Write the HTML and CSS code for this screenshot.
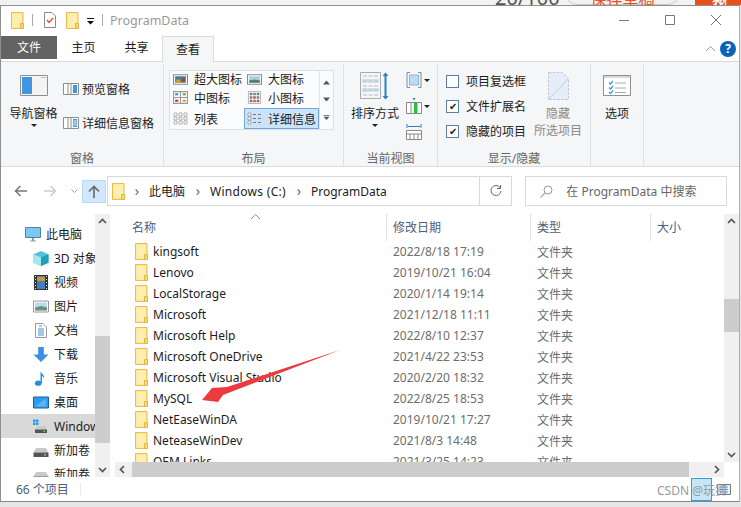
FILE: index.html
```html
<!DOCTYPE html>
<html lang="zh">
<head>
    <meta charset="UTF-8">
    <title>ProgramData</title>
    <link rel="stylesheet" href="styles.css">
</head>
<body>
    <svg class="defs" width="0" height="0">
        <symbol id="folder" viewBox="0 0 13 17">
            <path d="M.5.500h11.500v16H.5z" fill="#fde28f" stroke="#e8bf4c"/>
            <path d="M1.500 1.500h9.500v14h-9.500z" fill="#ffeeb0"/>
            <path d="M9.500 16.500v-5h3v5z" fill="#fbd978" stroke="#e3b63f"/>
        </symbol>
        <symbol id="drive" viewBox="0 0 16 10">
            <path d="M3 .5h10l2.500 4.500h-15z" fill="#c9c9c9"/>
            <path d="M.5 5h15v4.500h-15z" fill="#555"/>
            <path d="M11 6.500h2v1.500h-2z" fill="#5de05d"/>
        </symbol>
    </svg>

    <div class="backdrop">
        <span class="count">20/100</span>
        <span class="draft">保存草稿</span>
        <span class="publish">发布</span>
    </div>

    <div class="window">
        <!-- 标题栏 -->
        <div class="titlebar">
            <svg class="qa-folder"><use href="#folder"/></svg>
            <span class="qa-sep"></span>
            <svg class="qa-props" viewBox="0 0 12 16">
                <path d="M.5.500h7.500l3.500 3.500v11.500h-11z" fill="#fff" stroke="#8a8a8a"/>
                <path d="M3 8l2 2.500 4-4.500" fill="none" stroke="#e0512a" stroke-width="1.300"/>
            </svg>
            <svg class="qa-folder"><use href="#folder"/></svg>
            <svg class="qa-more" viewBox="0 0 7 7">
                <path d="M0 0h7v1h-7zM0 3h7l-3.500 3.500z" fill="#111"/>
            </svg>
            <span class="qa-sep"></span>
            <span class="title">ProgramData</span>
            <div class="win-btns">
                <svg viewBox="0 0 10 10"><path d="M0 5.500h10" stroke="#777"/></svg>
                <svg viewBox="0 0 10 10"><path d="M.5.500h9v9h-9z" fill="none" stroke="#777"/></svg>
                <svg viewBox="0 0 10 10"><path d="M0 0l10 10M10 0l-10 10" stroke="#777"/></svg>
            </div>
        </div>

        <!-- 选项卡 -->
        <div class="tabs">
            <span class="tab tab-file">文件</span>
            <span class="tab">主页</span>
            <span class="tab">共享</span>
            <span class="tab tab-active">查看</span>
            <svg class="collapse" viewBox="0 0 9 5"><path d="M0 5l4.500-4.500 4.500 4.500" fill="none" stroke="#999"/></svg>
            <span class="help">?</span>
        </div>

        <!-- 功能区 -->
        <div class="ribbon">
            <div class="group group-panes">
                <div class="group-body">
                    <div class="big-btn">
                        <svg class="big-icon" viewBox="0 0 28 21">
                            <path d="M.5.500h27v20h-27z" fill="#f4f4f4" stroke="#8e8e8e"/>
                            <path d="M2 2h10v17h-10z" fill="#3f97e4"/>
                            <path d="M21 2h5v1h-5z" fill="#bbb"/>
                        </svg>
                        <span class="big-label">导航窗格</span>
                        <span class="caret"></span>
                    </div>
                    <div class="pane-col">
                        <div class="pane-row">
                            <svg class="pane-icon" viewBox="0 0 16 12">
                                <path d="M.5.500h15v11h-15z" fill="#fff" stroke="#8e8e8e"/>
                                <path d="M5 1v10M8 1v10" stroke="#8e8e8e"/>
                                <path d="M10 2h4v8h-4z" fill="#3f97e4"/>
                            </svg>
                            <span>预览窗格</span>
                        </div>
                        <div class="pane-row">
                            <svg class="pane-icon" viewBox="0 0 16 12">
                                <path d="M.5.500h15v11h-15z" fill="#fff" stroke="#8e8e8e"/>
                                <path d="M5 1v10M8 1v10" stroke="#8e8e8e"/>
                                <path d="M10 2h4v8h-4z" fill="#3f97e4"/>
                                <path d="M10.500 4h3M10.500 6h3M10.500 8h3" stroke="#fff"/>
                            </svg>
                            <span>详细信息窗格</span>
                        </div>
                    </div>
                </div>
                <div class="group-label">窗格</div>
            </div>

            <div class="group group-layout">
                <div class="group-body">
                    <div class="gallery">
                        <div class="gallery-items">
                            <div class="gal-item gal-top">
                                <svg viewBox="0 0 14 10"><path d="M.5.500h13v9h-13z" fill="#fff" stroke="#888"/><path d="M2 2h10v6h-10z" fill="#3b7f9e"/><path d="M3 5h4v3h-4z" fill="#d8a021"/><path d="M8 4h3v3h-3z" fill="#c0392b"/></svg>
                                <span>超大图标</span>
                            </div>
                            <div class="gal-item gal-top">
                                <svg viewBox="0 0 14 10"><path d="M.5.500h13v9h-13z" fill="#fff" stroke="#888"/><path d="M2 2h10v6h-10z" fill="#a9d0dd"/><path d="M2 6l5-1 5 1v2h-10z" fill="#557a70"/></svg>
                                <span>大图标</span>
                            </div>
                            <div class="gal-item">
                                <svg viewBox="0 0 14 12"><path d="M.5.500h13v11h-13zM7 .500v11M.5 6h13" fill="#fff" stroke="#999"/><path d="M2 2h3v2h-3z" fill="#4a90b8"/><path d="M9 2h3v2h-3z" fill="#7aa35a"/><path d="M2 8h3v2h-3z" fill="#c0392b"/><path d="M9 8h3v2h-3z" fill="#d8a021"/></svg>
                                <span>中图标</span>
                            </div>
                            <div class="gal-item">
                                <svg viewBox="0 0 15 15"><path d="M.5.500h14v14h-14z" fill="#fff" stroke="#aaa"/><path d="M2 2h3v3h-3zM6 2h3v3h-3zM10 2h3v3h-3zM2 6h3v3h-3zM10 6h3v3h-3zM6 10h3v3h-3z" fill="#6f7f86"/><path d="M6 6h3v3h-3zM2 10h3v3h-3zM10 10h3v3h-3z" fill="#b65a3c"/></svg>
                                <span>小图标</span>
                            </div>
                            <div class="gal-item">
                                <svg viewBox="0 0 15 13"><path d="M1 1h3v3h-3zM1 5h3v3h-3zM1 9h3v3h-3zM6 1h3v3h-3zM6 5h3v3h-3zM6 9h3v3h-3zM11 1h3v3h-3zM11 5h3v3h-3zM11 9h3v3h-3z" fill="#fff" stroke="#999" stroke-width=".7"/></svg>
                                <span>列表</span>
                            </div>
                            <div class="gal-item gal-selected">
                                <svg viewBox="0 0 15 13"><path d="M1 1h3v3h-3zM1 5h3v3h-3zM1 9h3v3h-3z" fill="#fff" stroke="#888" stroke-width=".7"/><path d="M6 2.500h3M6 6.500h3M6 10.500h3M11 2.500h3M11 6.500h3M11 10.500h3" stroke="#777"/></svg>
                                <span>详细信息</span>
                            </div>
                        </div>
                        <div class="gallery-arrows">
                            <svg viewBox="0 0 7 4"><path d="M0 4l3.500-4 3.500 4z" fill="#555"/></svg>
                            <svg viewBox="0 0 7 4"><path d="M0 0l3.500 4 3.500-4z" fill="#555"/></svg>
                            <svg viewBox="0 0 7 6"><path d="M0 0h7v1h-7zM0 2l3.500 4 3.500-4z" fill="#555"/></svg>
                        </div>
                    </div>
                </div>
                <div class="group-label">布局</div>
            </div>

            <div class="group group-view">
                <div class="group-body">
                    <div class="big-btn big-sort">
                        <svg class="sort-icon" viewBox="0 0 30 28">
                            <path d="M.5.500h20v26h-20z" fill="#f6f6f6" stroke="#aaa"/>
                            <path d="M2 7h17v4h-17zM2 16h17v4h-17z" fill="#cfe3ef"/>
                            <path d="M3 4h15M3 9h15M3 14h15M3 18h15M3 23h15" stroke="#b5bcc1" stroke-dasharray="4 1.500"/>
                            <path d="M25.500 2v24" stroke="#2a7fc4" stroke-width="2"/>
                            <path d="M22.500 4l3-3.500 3 3.500zM22.500 24l3 3.500 3-3.500z" fill="#2a7fc4"/>
                        </svg>
                        <span class="big-label">排序方式</span>
                        <span class="caret"></span>
                    </div>
                    <div class="view-col">
                        <div class="view-row">
                            <svg viewBox="0 0 16 16"><path d="M4 .500h-3v15h3M12 .500h3v15h-3" fill="none" stroke="#888"/><path d="M3.500 3h9v10h-9z" fill="#b8dcf8" stroke="#8cb6d8"/></svg>
                            <span class="caret caret-side"></span>
                        </div>
                        <div class="view-row">
                            <svg viewBox="0 0 16 16"><path d="M.5 4.500h15v11h-15zM5 4.500v11" fill="#fff" stroke="#888"/><path d="M8 4.500h3.500v11h-3.500z" fill="#26c43a"/><path d="M6.500 0h3l-1.500 2.500z" fill="#2a7fc4"/></svg>
                            <span class="caret caret-side"></span>
                        </div>
                        <div class="view-row">
                            <svg viewBox="0 0 16 16"><path d="M1 0v4M15 0v4M2 2.500h12" stroke="#2a7fc4"/><path d="M.5 6.500h15v9h-15zM.5 10h15M4 10v5.500M8 10v5.500M12 10v5.500" fill="#fff" stroke="#888"/></svg>
                        </div>
                    </div>
                </div>
                <div class="group-label">当前视图</div>
            </div>

            <div class="group group-show">
                <div class="group-body">
                    <div class="check-col">
                        <label class="check-row"><span class="box"></span>项目复选框</label>
                        <label class="check-row"><span class="box box-on">✔</span>文件扩展名</label>
                        <label class="check-row"><span class="box box-on">✔</span>隐藏的项目</label>
                    </div>
                    <div class="big-btn big-hide">
                        <svg class="hide-icon" viewBox="0 0 21 28">
                            <path d="M.5.500h14l6 6v21h-20z" fill="#e6edf8" stroke="#c3cddc" stroke-dasharray="3 1"/>
                            <path d="M.5 27.500l20-21" stroke="#c3cddc"/>
                        </svg>
                        <span>隐藏</span>
                        <span>所选项目</span>
                    </div>
                </div>
                <div class="group-label">显示/隐藏</div>
            </div>

            <div class="group group-options">
                <div class="group-body">
                    <div class="big-btn big-options">
                        <svg class="big-icon" viewBox="0 0 28 21">
                            <path d="M.5.500h27v20h-27z" fill="#fff" stroke="#8e8e8e"/>
                            <path d="M1 1h26v2h-26z" fill="#d9d9d9"/>
                            <path d="M6 7.500l1.500 1.500 2.500-3M6 12.500l1.500 1.500 2.500-3M6 17l1.500 1.500 2.500-3" fill="none" stroke="#3f97e4" stroke-width="1.300"/>
                            <path d="M12 8h11M12 13h11M12 17.500h11" stroke="#aaa"/>
                        </svg>
                        <span class="big-label">选项</span>
                    </div>
                </div>
            </div>
        </div>

        <!-- 地址栏 -->
        <div class="addressbar">
            <svg class="nav-arrow" viewBox="0 0 13 12"><path d="M13 6h-11M6.500 1l-5 5 5 5" fill="none" stroke="#777" stroke-width="1.500"/></svg>
            <svg class="nav-arrow" viewBox="0 0 13 12"><path d="M0 6h11M6.500 1l5 5-5 5" fill="none" stroke="#ccc" stroke-width="1.500"/></svg>
            <svg class="nav-down" viewBox="0 0 7 4"><path d="M.5.500l3 3 3-3" fill="none" stroke="#6aaee8"/></svg>
            <span class="up-btn">
                <svg viewBox="0 0 12 13"><path d="M6 13v-11M1 6.500l5-5 5 5" fill="none" stroke="#666" stroke-width="1.600"/></svg>
            </span>
            <div class="path-box">
                <svg class="path-folder"><use href="#folder"/></svg>
                <span class="chev">›</span><span class="path-pc">此电脑</span>
                <span class="chev">›</span><span class="path-drive">Windows (C:)</span>
                <span class="chev">›</span><span>ProgramData</span>
            </div>
            <span class="refresh">
                <svg viewBox="0 0 12 12"><path d="M10 2.500a5 5 0 1 0 1 3.500" fill="none" stroke="#666"/><path d="M10.500 0v3.500h-3.500" fill="none" stroke="#666"/></svg>
            </span>
            <div class="search-box">
                <svg viewBox="0 0 13 13"><circle cx="8" cy="5" r="4" fill="none" stroke="#999"/><path d="M5 8l-4.500 4.500" stroke="#c9a58a" stroke-width="1.200"/></svg>
                <span>在 ProgramData 中搜索</span>
            </div>
        </div>

        <!-- 主体 -->
        <div class="main">
            <div class="nav-pane">
                <div class="nav-list">
                    <div class="nav-item lvl-1">
                        <svg viewBox="0 0 16 15"><path d="M.5.500h15v10h-15z" fill="#7cc8f5" stroke="#5a7f9a"/><path d="M5 13.500h6v1h-6zM7 11h2v3h-2z" fill="#8aa0ae"/></svg>
                        <span>此电脑</span>
                    </div>
                    <div class="nav-item">
                        <svg viewBox="0 0 16 16"><path d="M8 0l8 3.500v9l-8 3.500-8-3.500v-9z" fill="#4fc4d8"/><path d="M8 7l8-3.500v9l-8 3.500z" fill="#1f9fb8"/><path d="M0 3.500l8 3.500v9l-8-3.500z" fill="#a5e6ef"/></svg>
                        <span>3D 对象</span>
                    </div>
                    <div class="nav-item">
                        <svg viewBox="0 0 14 15"><path d="M0 0h14v15h-14z" fill="#333"/><path d="M3 1h8v13h-8z" fill="#3f7fc8"/><path d="M3 2h8v4h-8z" fill="#c79b2e"/><path d="M1 1.500h1M1 4.500h1M1 7.500h1M1 10.500h1M1 13.500h1M12 1.500h1M12 4.500h1M12 7.500h1M12 10.500h1M12 13.500h1" stroke="#ddd"/></svg>
                        <span>视频</span>
                    </div>
                    <div class="nav-item">
                        <svg viewBox="0 0 16 12"><path d="M.5.500h15v11h-15z" fill="#fff" stroke="#999"/><path d="M2 2h12v8h-12z" fill="#bcdbe8"/><path d="M2 7l6-1.500 6 1.500v3h-12z" fill="#6d8f84"/></svg>
                        <span>图片</span>
                    </div>
                    <div class="nav-item">
                        <svg viewBox="0 0 12 15"><path d="M.5.500h7.500l3.500 3.500v10.500h-11z" fill="#fff" stroke="#999"/><path d="M3 6h6M3 8h6M3 10h6M3 12h6" stroke="#4a90c8"/><path d="M4 3h3" stroke="#4a90c8"/></svg>
                        <span>文档</span>
                    </div>
                    <div class="nav-item">
                        <svg viewBox="0 0 16 16"><path d="M5 0h6v8h5l-8 8-8-8h5z" fill="#3a8fe0"/></svg>
                        <span>下载</span>
                    </div>
                    <div class="nav-item">
                        <svg viewBox="0 0 16 16"><ellipse cx="5" cy="13" rx="3.500" ry="2.800" fill="#1f8fe8"/><path d="M7.500 13v-13c.5 3 5 4 3.500 8-.5-2-2-3-2-3v8z" fill="#1f8fe8"/></svg>
                        <span>音乐</span>
                    </div>
                    <div class="nav-item">
                        <svg viewBox="0 0 16 12"><path d="M.5.500h15v11h-15z" fill="#2d9cf0" stroke="#1a5f9e"/><path d="M2 10l11-8v8z" fill="#5ab5f5"/></svg>
                        <span>桌面</span>
                    </div>
                    <div class="nav-item nav-selected">
                        <svg viewBox="0 0 16 14"><path d="M0 0h2.500v2.500h-2.500zM3 0h2.500v2.500h-2.500zM0 3h2.500v2.500h-2.500zM3 3h2.500v2.500h-2.500z" fill="#18a3e8"/><use href="#drive" x="0" y="6" width="16" height="8"/></svg>
                        <span>Windows (C:)</span>
                    </div>
                    <div class="nav-item">
                        <svg viewBox="0 0 16 14"><use href="#drive" x="0" y="4" width="16" height="10"/></svg>
                        <span>新加卷</span>
                    </div>
                    <div class="nav-item">
                        <svg viewBox="0 0 16 14"><use href="#drive" x="0" y="4" width="16" height="10"/></svg>
                        <span>新加卷</span>
                    </div>
                </div>
            </div>
            <div class="scroll-v scroll-nav">
                <svg class="sb-btn" viewBox="0 0 15 15"><path d="M4 9l3.500-3.500 3.500 3.500" fill="none" stroke="#555" stroke-width="1.700"/></svg>
                <div class="track-nav"><span class="thumb-nav"></span></div>
                <svg class="sb-btn" viewBox="0 0 15 15"><path d="M4 6l3.500 3.500 3.500-3.500" fill="none" stroke="#555" stroke-width="1.700"/></svg>
            </div>

            <div class="content">
                <div class="list-area">
                    <div class="list-wrap">
                        <div class="list-head">
                            <span class="col-name">名称<svg class="sort-up" viewBox="0 0 9 5"><path d="M0 5l4.500-4.500 4.500 4.500" fill="none" stroke="#888"/></svg></span>
                            <span class="col-date">修改日期</span>
                            <span class="col-type">类型</span>
                            <span class="col-size">大小</span>
                        </div>
                        <div class="rows" id="rows"></div>
                    </div>
                    <div class="scroll-v scroll-list">
                        <svg class="sb-btn" viewBox="0 0 15 15"><path d="M4 9l3.500-3.500 3.500 3.500" fill="none" stroke="#555" stroke-width="1.700"/></svg>
                        <div class="track-list"><span class="thumb-list"></span></div>
                        <svg class="sb-btn" viewBox="0 0 15 15"><path d="M4 6l3.500 3.500 3.500-3.500" fill="none" stroke="#555" stroke-width="1.700"/></svg>
                    </div>
                </div>
                <div class="scroll-h">
                    <svg class="sb-btn" viewBox="0 0 15 15"><path d="M9 4l-3.500 3.500 3.500 3.500" fill="none" stroke="#555" stroke-width="1.700"/></svg>
                    <div class="track-h"><span class="thumb-h"></span></div>
                    <svg class="sb-btn" viewBox="0 0 15 15"><path d="M6 4l3.500 3.500-3.500 3.500" fill="none" stroke="#555" stroke-width="1.700"/></svg>
                </div>
                <svg class="red-arrow" viewBox="0 0 140 54"><path d="M138 0L25 37 10 38 0 50 16 52 21 45z" fill="#ec3a3f"/></svg>
            </div>
        </div>

        <!-- 状态栏 -->
        <div class="statusbar">
            <span class="item-count">66 个项目</span>
            <span class="status-sep"></span>
            <span class="wm-box"></span>
            <svg class="wm-view" viewBox="0 0 14 11"><path d="M.5.500h13v10h-13z" fill="#eef6fc" stroke="#777"/><path d="M3 3h8M3 5.500h8M3 8h8" stroke="#3f97e4"/></svg>
            <span class="watermark">CSDN @玩狮</span>
        </div>
    </div>

    <script>
        // 文件列表数据
        const files = [
            ['kingsoft', '2022/8/18 17:19'],
            ['Lenovo', '2019/10/21 16:04'],
            ['LocalStorage', '2020/1/14 19:14'],
            ['Microsoft', '2021/12/18 11:11'],
            ['Microsoft Help', '2022/8/10 12:37'],
            ['Microsoft OneDrive', '2021/4/22 23:53'],
            ['Microsoft Visual Studio', '2020/2/20 18:32'],
            ['MySQL', '2022/8/25 18:53'],
            ['NetEaseWinDA', '2019/10/21 17:27'],
            ['NeteaseWinDev', '2021/8/3 14:48'],
            ['OEM Links', '2021/3/25 14:23']
        ];
        const rows = document.getElementById('rows');
        files.forEach(([name, date]) => {
            const row = document.createElement('div');
            row.className = 'row';
            row.innerHTML = `<span class="col-name"><svg class="row-folder"><use href="#folder"/></svg>${name}</span>` +
                `<span class="col-date">${date}</span><span class="col-type">文件夹</span>`;
            rows.appendChild(row);
        });
    </script>
</body>
</html>
```

FILE: styles.css
```css
* {
    box-sizing: border-box;
}
html, body {
    height: 100%;
}
body {
    margin: 0;
    overflow: hidden;
    background: #e6e6e6;
    font-family: "Noto Sans", "Noto Sans CJK SC", sans-serif;
    font-size: 12px;
    color: #1c1c1c;
    display: flex;
    flex-direction: column;
}
svg {
    display: block;
    flex: none;
}
.defs {
    position: absolute;
}

/* 窗口后面露出的页面 */
.backdrop {
    height: 5px;
    overflow: hidden;
    background: #f2f2f2;
    display: flex;
    align-items: flex-start;
    flex: none;
}
.count {
    margin: -8px 0 0 495px;
    width: 70px;
    flex: none;
    font-size: 20px;
    line-height: 12px;
    color: #555;
}
.draft {
    width: 115px;
    height: 24px;
    flex: none;
    margin-top: -19px;
    border: 1px solid #c8c8c8;
    border-radius: 12px;
    font-size: 16px;
    line-height: 34px;
    text-align: center;
    color: #e8501e;
}
.publish {
    margin-left: auto;
    width: 46px;
    height: 5px;
    padding-left: 17px;
    background: #e8501e;
    color: #fff;
    font-size: 16px;
    line-height: 0;
}

.window {
    width: 740px;
    height: 497px;
    flex: none;
    background: #fff;
    border: 1px solid #8f8f8f;
    border-right-color: #b0b0b0;
    border-bottom: 1px solid #888;
    display: flex;
    flex-direction: column;
}

/* 标题栏 */
.titlebar {
    height: 30px;
    flex: none;
    display: flex;
    align-items: center;
    padding: 0 0 2px 10px;
}
.qa-folder {
    width: 13px;
    height: 17px;
    margin-right: 8px;
}
.qa-sep {
    width: 1px;
    height: 12px;
    background: #aaa;
    margin-right: 10px;
}
.qa-props {
    width: 12px;
    height: 16px;
    margin: 0 10px 0 1px;
}
.qa-more {
    width: 7px;
    height: 7px;
    margin: 2px 8px 0 0;
}
.title {
    color: #9a9a9a;
    font-size: 12.500px;
    margin-left: -3px;
}
.win-btns {
    margin-left: auto;
    display: flex;
    gap: 36px;
    padding-right: 18px;
}
.win-btns svg {
    width: 10px;
    height: 10px;
}

/* 选项卡 */
.tabs {
    height: 26px;
    flex: none;
    display: flex;
    align-items: flex-start;
    border-bottom: 1px solid #dadbdc;
    position: relative;
}
.tab {
    height: 23px;
    line-height: 23px;
    width: 53px;
    text-align: center;
}
.tab-file {
    width: 56px;
    background: #636363;
    color: #fff;
}
.tab-active {
    height: 26px;
    width: 52px;
    border: 1px solid #dadbdc;
    border-bottom: none;
    background: #f5f6f7;
    line-height: 25px;
    position: relative;
    margin-left: -1px;
}
.collapse {
    width: 9px;
    height: 5px;
    margin: 10px 0 0 auto;
}
.help {
    width: 16px;
    height: 16px;
    margin: 5px 3px 0 5px;
    border-radius: 50%;
    background: #0a63b8;
    color: #fff;
    font-weight: 700;
    font-size: 12px;
    line-height: 16px;
    text-align: center;
}

/* 功能区 */
.ribbon {
    height: 105px;
    flex: none;
    background: #f5f6f7;
    border-bottom: 1px solid #dadbdc;
    display: flex;
    padding-top: 2px;
    font-size: 12px;
}
.group {
    display: flex;
    flex-direction: column;
    border-right: 1px solid #dfe0e1;
    height: 102px;
}
.group-body {
    flex: 1;
    display: flex;
    min-height: 0;
}
.group-label {
    height: 18px;
    line-height: 22px;
    text-align: center;
    color: #666;
}
.group-panes { width: 163px; }
.group-layout { width: 180px; }
.group-view { width: 94px; }
.group-show { width: 153px; }
.group-options { width: 53px; }

.big-btn {
    display: flex;
    flex-direction: column;
    align-items: center;
}
.big-icon {
    width: 28px;
    height: 21px;
    margin-top: 11px;
}
.big-label {
    margin-top: 9px;
    line-height: 18px;
}
.caret {
    width: 0;
    height: 0;
    border: 3px solid transparent;
    border-top: 3px solid #222;
    border-bottom: none;
    margin-top: 1px;
}
.group-panes .big-btn {
    width: 49px;
    margin-left: 8px;
}
.pane-col {
    display: flex;
    flex-direction: column;
    gap: 16px;
    margin: 16px 0 0 5px;
}
.pane-row {
    display: flex;
    align-items: center;
    gap: 3px;
    height: 18px;
    white-space: nowrap;
}
.pane-icon {
    width: 16px;
    height: 12px;
}

/* 布局库 */
.gallery {
    margin: 6px 0 0 5px;
    width: 165px;
    height: 60px;
    display: flex;
    background: #fafbfc;
    border: 1px solid #dfe0e1;
}
.gallery-items {
    width: 149px;
    display: grid;
    grid-template-columns: 74px 75px;
    grid-template-rows: 16px 21px 21px;
}
.gal-item {
    display: flex;
    align-items: center;
    gap: 6px;
    padding-left: 3px;
    white-space: nowrap;
}
.gal-item svg {
    width: 15px;
    height: 13px;
}
.gal-top {
    overflow: hidden;
}
.gal-selected {
    background: #cce4f9;
    border: 1px solid #70a8dd;
    padding-left: 2px;
}
.gallery-arrows {
    flex: 1;
    border-left: 1px solid #e3e4e5;
    display: flex;
    flex-direction: column;
    align-items: center;
    justify-content: space-around;
    padding: 3px 0;
}
.gallery-arrows svg {
    width: 7px;
    height: 5px;
}

/* 当前视图 */
.big-sort {
    width: 50px;
    margin-left: 6px;
}
.sort-icon {
    width: 30px;
    height: 28px;
    margin-top: 8px;
}
.big-sort .big-label {
    margin-top: 5px;
}
.view-col {
    display: flex;
    flex-direction: column;
    gap: 10px;
    margin: 8px 0 0 6px;
}
.view-row {
    display: flex;
    align-items: center;
    height: 16px;
    gap: 2px;
}
.view-row svg {
    width: 16px;
    height: 16px;
}
.caret-side {
    margin: 0;
}

/* 显示/隐藏 */
.check-col {
    display: flex;
    flex-direction: column;
    gap: 7px;
    margin: 8px 0 0 8px;
    width: 87px;
}
.check-row {
    display: flex;
    align-items: center;
    height: 18px;
    white-space: nowrap;
}
.box {
    width: 13px;
    height: 13px;
    border: 1px solid #5a7dab;
    background: #fff;
    margin-right: 7px;
    font-size: 10px;
    line-height: 11px;
    text-align: center;
    color: #222;
    flex: none;
}
.big-hide {
    width: 50px;
    color: #8a8a8a;
    white-space: nowrap;
    line-height: 17px;
}
.hide-icon {
    width: 21px;
    height: 28px;
    margin: 8px 0 5px;
}
.big-options {
    width: 52px;
    color: #1c1c1c;
}

/* 地址栏 */
.addressbar {
    height: 47px;
    flex: none;
    display: flex;
    align-items: center;
    padding: 1px 12px 0 13px;
}
.nav-arrow {
    width: 13px;
    height: 12px;
    margin-right: 17px;
}
.nav-down {
    width: 7px;
    height: 4px;
    margin: 0 4px 0 -3px;
}
.up-btn {
    width: 24px;
    height: 23px;
    background: #cfe8fb;
    border: 1px solid #bcdcf4;
    display: flex;
    align-items: center;
    justify-content: center;
    margin-right: 1px;
}
.up-btn svg {
    width: 12px;
    height: 13px;
}
.path-box {
    width: 373px;
    height: 30px;
    border: 1px solid #d9d9d9;
    border-right: none;
    display: flex;
    align-items: center;
    padding-left: 4px;
    white-space: nowrap;
}
.path-folder {
    width: 13px;
    height: 17px;
}
.chev {
    width: 24px;
    text-align: center;
    color: #666;
    font-size: 14px;
    line-height: 14px;
}
.path-pc {
    margin-right: 1px;
}
.path-drive {
    width: 77px;
    letter-spacing: .3px;
}
.refresh {
    width: 33px;
    height: 30px;
    border: 1px solid #d9d9d9;
    display: flex;
    align-items: center;
    justify-content: center;
}
.refresh svg {
    width: 12px;
    height: 12px;
}
.search-box {
    margin-left: 13px;
    width: 202px;
    height: 30px;
    border: 1px solid #d9d9d9;
    display: flex;
    align-items: center;
    padding-left: 14px;
    gap: 13px;
    color: #666;
    white-space: nowrap;
}
.search-box svg {
    width: 13px;
    height: 13px;
}

/* 主体 */
.main {
    flex: 1;
    min-height: 0;
    display: flex;
}
.nav-pane {
    width: 94px;
    flex: none;
    overflow: hidden;
    padding-top: 8px;
}
.nav-item {
    height: 24px;
    display: flex;
    align-items: center;
    padding-left: 32px;
    gap: 5px;
    white-space: nowrap;
}
.nav-item svg {
    width: 16px;
    height: 15px;
}
.lvl-1 {
    padding-left: 24px;
}
.nav-selected {
    background: #d9d9d9;
}
.scroll-v {
    width: 15px;
    flex: none;
    display: flex;
    flex-direction: column;
    background: #f0f0f0;
}
.sb-btn {
    width: 15px;
    height: 15px;
    flex: none;
}
.track-nav, .track-list, .track-h {
    flex: 1;
    min-height: 0;
}
.thumb-nav {
    display: block;
    height: 107px;
    margin-top: 107px;
    background: #cdcdcd;
}
.content {
    flex: 1;
    min-width: 0;
    margin-left: 5px;
    display: flex;
    flex-direction: column;
    position: relative;
}
.list-area {
    flex: 1;
    min-height: 0;
    display: flex;
}
.list-wrap {
    flex: 1;
    min-width: 0;
    overflow: hidden;
}
.list-head {
    height: 27px;
    display: flex;
    align-items: center;
    color: #4c607a;
    position: relative;
}
.list-head span {
    height: 27px;
    line-height: 27px;
}
.list-head .col-date, .list-head .col-type, .list-head .col-size {
    border-left: 1px solid #e5e5e5;
    padding-left: 6px;
}
.col-name {
    width: 271px;
    padding-left: 17px;
    display: flex;
    align-items: center;
    position: relative;
    white-space: nowrap;
}
.col-date {
    width: 145px;
    padding-left: 7px;
    color: #6d6d6d;
}
.col-type {
    width: 120px;
    color: #6d6d6d;
    padding-left: 6px;
}
.list-head .col-date {
    width: 144px;
    color: #4c607a;
}
.list-head .col-type {
    color: #4c607a;
}
.col-size {
    width: 70px;
}
.sort-up {
    position: absolute;
    left: 136px;
    top: 0;
    width: 9px;
    height: 5px;
}
.row {
    height: 21px;
    display: flex;
    align-items: center;
}
.row-folder {
    width: 13px;
    height: 17px;
    margin: 0 5px 0 3px;
}
.thumb-list {
    display: block;
    height: 33px;
    margin-top: 70px;
    background: #cdcdcd;
}
.scroll-h {
    height: 15px;
    flex: none;
    display: flex;
    background: #f0f0f0;
    margin-right: 15px;
}
.thumb-h {
    display: block;
    height: 15px;
    width: 557px;
    margin-left: 2px;
    background: #cdcdcd;
}
.red-arrow {
    position: absolute;
    left: 87px;
    top: 136px;
    width: 140px;
    height: 54px;
}

/* 状态栏 */
.statusbar {
    height: 24px;
    flex: none;
    display: flex;
    align-items: center;
    padding-left: 15px;
    color: #4c607a;
    position: relative;
}
.status-sep {
    width: 1px;
    height: 12px;
    background: #e8e8e8;
    margin-left: 11px;
}
.wm-box {
    margin-left: auto;
    width: 21px;
    height: 23px;
    margin-right: 5px;
    background: #c6e5f7;
    border: 1px solid #2ea0d8;
}
.wm-view {
    width: 14px;
    height: 11px;
    margin-right: 8px;
}
.watermark {
    position: absolute;
    right: 12px;
    top: 4px;
    color: #999;
    white-space: nowrap;
}
```
